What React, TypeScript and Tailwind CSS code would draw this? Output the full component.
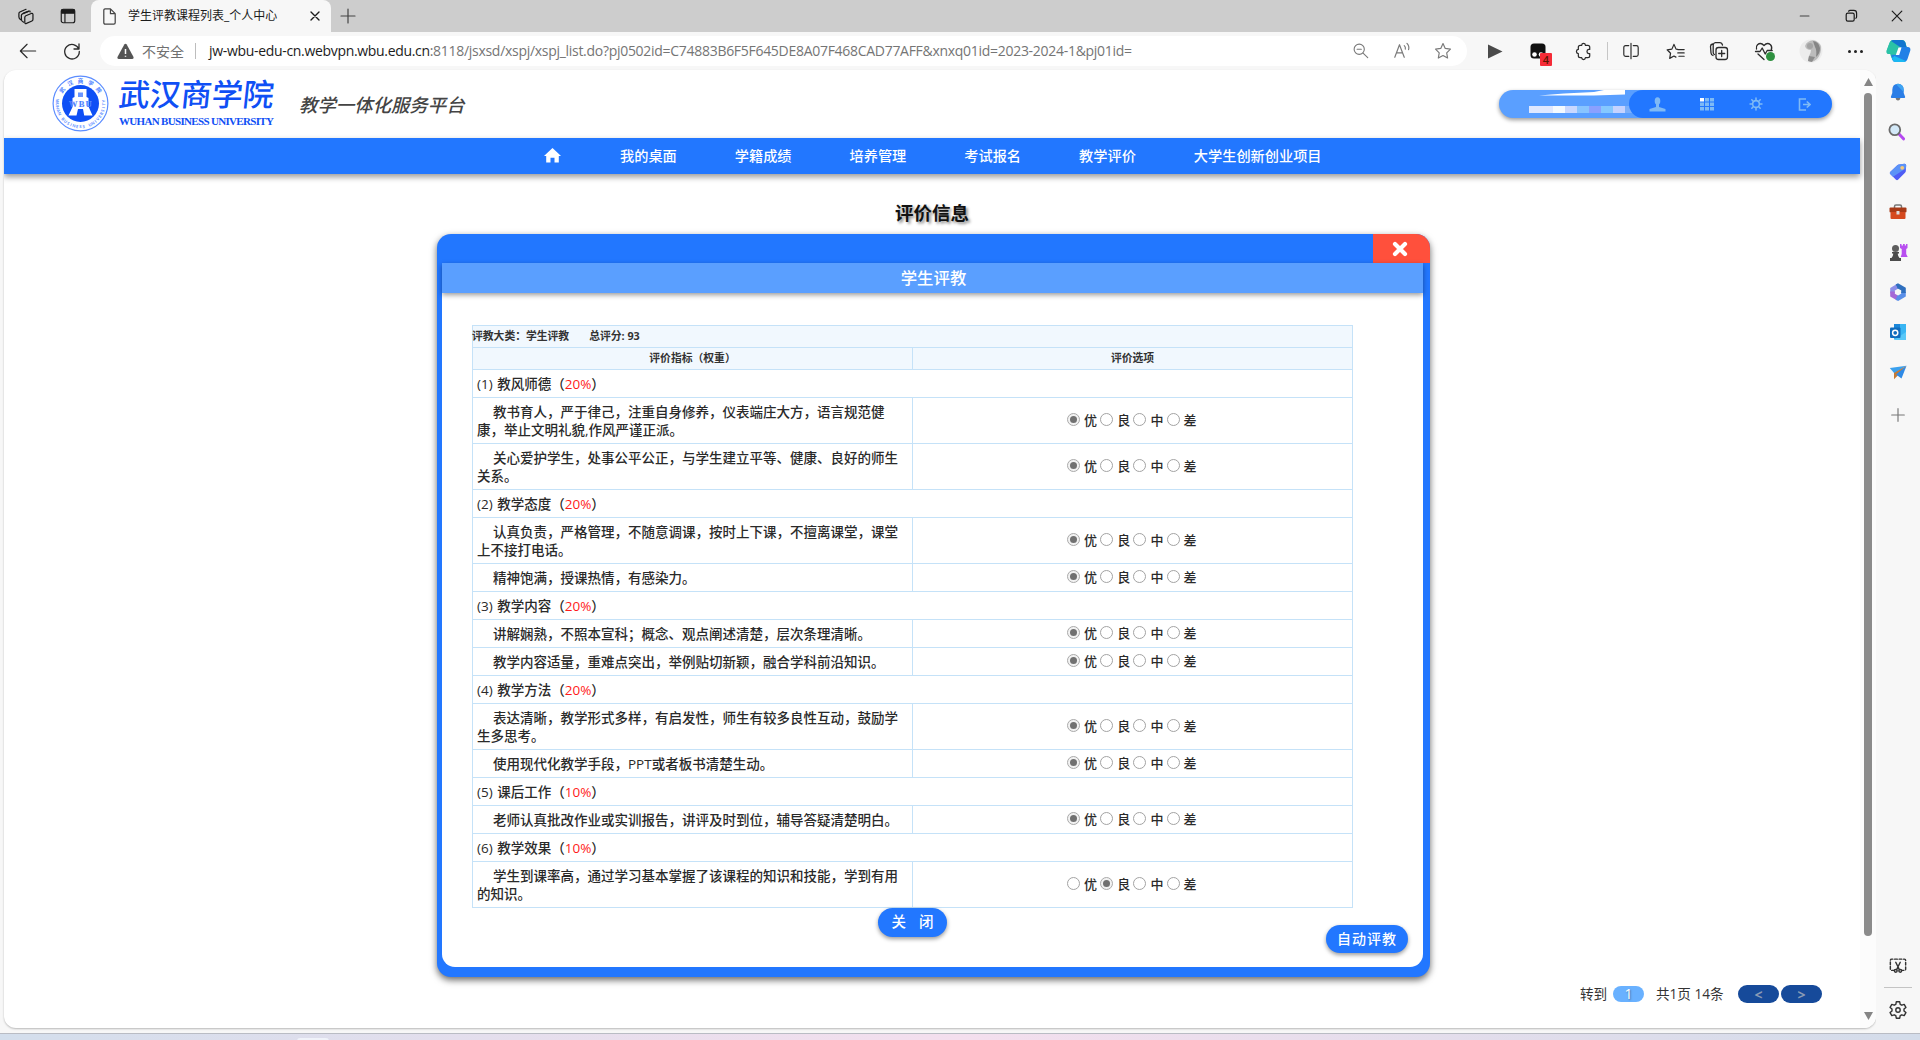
import React from "react";

type Kids = { children?: React.ReactNode };

/* ---------- generic helpers ---------- */

function Stroke({ size = 20, children, className = "", w = 1.3 }: Kids & { size?: number; className?: string; w?: number }) {
  return (
    <svg width={size} height={size} viewBox="0 0 20 20" fill="none" stroke="currentColor" strokeWidth={w} strokeLinecap="round" strokeLinejoin="round" className={"shrink-0 " + className}>
      {children}
    </svg>
  );
}

/* ---------- browser chrome ---------- */

function TabStrip() {
  return (
    <div className="flex h-8 shrink-0 items-center bg-[#cdcdcd] text-[#1b1b1b]">
      <div className="flex w-[52px] justify-center">
        <Stroke size={19}>
          <path d="M7 6.5 12.5 4.3q1.3-.4 1.3.9M4.3 13.5q-2.3-1-2.3-3V7q0-1.2 1-1.7L9.5 2.4" />
          <path d="M6.8 16q-2.2-.8-2.2-3V9q0-1.3 1.1-1.8L12 4.6" />
          <path d="M9.3 9.2 15 6.8q1.800-.6 1.800 1.200v5q0 1.300-1.100 1.800L10 17.300q-1.800.6-1.800-1.200V11q0-1.300 1.100-1.800z" />
        </Stroke>
      </div>
      <div className="flex w-[32px] justify-center">
        <Stroke size={18}>
          <rect x="2.5" y="2.5" width="15" height="15" rx="2.2" />
          <path d="M3 3.2h14v3.6H3z" fill="currentColor" />
          <path d="M6.6 7v10" />
        </Stroke>
      </div>
      <div className="ml-[7px] flex h-8 w-[240px] items-center rounded-t-lg bg-[#f7f7f7]">
        <div className="flex w-[37px] justify-center">
          <Stroke size={19} className="text-[#444]">
            <path d="M5 2h6l5 5v9.500q0 1.500-1.500 1.500h-9Q4 18 4 16.500V3.500Q4 2 5.500 2M11 2v5h5" />
          </Stroke>
        </div>
        <span className="w-[172px] text-[12px]">学生评教课程列表_个人中心</span>
        <Stroke size={16} className="ml-[7px]" w={1.7}>
          <path d="m5 5 10 10M15 5 5 15" />
        </Stroke>
      </div>
      <Stroke size={20} className="ml-[7px] text-[#444]" w={1.2}>
        <path d="M10 3v14M3 10h14" />
      </Stroke>
      <div className="ml-auto flex">
        <div className="flex w-[46px] justify-center">
          <Stroke size={16} className="text-[#444]"><path d="M4 10h11" /></Stroke>
        </div>
        <div className="flex w-[46px] justify-center">
          <Stroke size={16} w={1.5}>
            <rect x="4" y="6.500" width="10" height="10" rx="2" />
            <path d="M7 4q.5-1 2-1h4.500Q17 3 17 6.500v4.300q0 1.500-1 2" />
          </Stroke>
        </div>
        <div className="flex w-[46px] justify-center">
          <Stroke size={16} w={1.5}><path d="m4 4 12 12M16 4 4 16" /></Stroke>
        </div>
      </div>
    </div>
  );
}

function ToolCell({ children }: Kids) {
  return <div className="relative flex w-[45px] shrink-0 items-center justify-center">{children}</div>;
}

function Copilot() {
  return (
    <svg width="25" height="24" viewBox="0 0 25 24">
      <path d="M7.500 1h8.500q2.500 0 3.300 2.500L20.500 8H15L10 21H8.500q-2.500 0-3.200-2.500L4.200 15H3q-3 0-2.300-3.500L3.500 4Q4.500 1 7.500 1z" fill="#2ab7b0" />
      <path d="M7.500 1h8.500q2.500 0 3.300 2.500L20.500 8H14q-2 0-2.600 1.700L9.800 15H3q-3 0-2.300-3.500L3.500 4Q4.500 1 7.500 1z" fill="#2bc3a6" />
      <path d="M7 1h9q2.500 0 3.300 2.500L20.500 8H14L5 2z" fill="#1276cf" />
      <path d="M15.200 8h6.500q3.300 0 2.600 3.500L21.500 20q-1 3-4 3H9.500q-2.500 0-3.300-2.500L5.500 16h5q2 0 2.600-1.700z" fill="#2180e6" />
      <path d="m8.500 17-2.600 2q.9 4 3.600 4h8q1.500 0 2.500-1z" fill="#1bb8f2" />
      <path d="M12.500 8.500h3l-2.300 7.500h-3.400z" fill="#fff" />
    </svg>
  );
}

function Toolbar() {
  return (
    <div className="flex h-[38px] shrink-0 items-center bg-[#f7f7f7] text-[#2b2b2b]">
      <div className="flex w-[56px] justify-center">
        <Stroke size={18}><path d="M18.500 10H1.500M9 2.500 1.500 10 9 17.500" /></Stroke>
      </div>
      <div className="flex w-[32px] justify-center">
        <Stroke size={20} w={1.3}><path d="M16.800 8A7.300 7.300 0 1 0 17.300 10.500M17 3v5h-5" /></Stroke>
      </div>
      <div className="ml-3 flex h-[30px] w-[1367px] items-center rounded-full bg-white">
        <svg width="17" height="17" viewBox="0 0 17 17" className="ml-[17px]">
          <path d="M7.300 1.500q1.200-1.600 2.400 0l6.700 12.300q.7 2-1.300 2.200H1.900q-2-.2-1.300-2.200z" fill="#555" />
          <path d="M8.500 6v5M8.500 12.800v1" stroke="#fff" strokeWidth="1.500" />
        </svg>
        <span className="ml-[8px] text-[14px] text-[#707070]">不安全</span>
        <div className="ml-[11px] h-4 w-px bg-[#bdbdbd]" />
        <span className="ml-[13px] w-[1131px] whitespace-nowrap text-[14px] leading-5 text-[#757575]">
          <span className="tracking-[-0.32px] text-[#1c1c1c]">jw-wbu-edu-cn.webvpn.wbu.edu.cn</span>
          <span className="tracking-[-0.29px]">:8118/jsxsd/xspj/xspj_list.do?pj0502id=C74883B6F5F645DE8A07F468CAD77AFF&amp;xnxq01id=2023-2024-1&amp;pj01id=</span>
        </span>
        <div className="flex text-[#7a7a7a]">
          <div className="flex w-[41px] justify-center">
            <Stroke size={17}><circle cx="8.500" cy="8.500" r="6" /><path d="M6 8.500h5M13 13l5.500 5.500" /></Stroke>
          </div>
          <div className="flex w-[41px] justify-center">
            <Stroke size={18}><path d="m2 17 5.200-14L12.500 17M4 12h6.700M12.500 4q1.700 1.500 1.200 4M15.500 1.500q3 3 1.800 7" /></Stroke>
          </div>
          <div className="flex w-[41px] justify-center">
            <Stroke size={18}><path d="m10 1.800 2.500 5.300 5.800.8-4.200 4.100 1 5.800-5.100-2.800-5.200 2.800 1-5.800L1.700 7.900l5.800-.8z" /></Stroke>
          </div>
        </div>
      </div>
      <div className="ml-[5px] flex h-full">
        <ToolCell>
          <svg width="16" height="15" viewBox="0 0 16 15"><path d="M1 0.500 15.500 7.500 1 14.500z" fill="#4a4a4a" /></svg>
        </ToolCell>
        <ToolCell>
          <svg width="16" height="16" viewBox="0 0 16 16" className="-ml-1">
            <rect x="0.500" y="0.500" width="15" height="15" rx="3.500" fill="#111" />
            <circle cx="4.500" cy="11.500" r="2.300" fill="#fff" />
            <circle cx="11" cy="11.500" r="2.300" fill="#fff" />
          </svg>
          <span className="absolute top-[21px] left-[23px] flex h-[13px] w-[12px] items-center justify-center rounded-[1px] bg-[#f52b37] text-[11px] leading-none font-semibold text-[#5a1500]">4</span>
        </ToolCell>
        <ToolCell>
          <Stroke size={19}>
            <path d="M7 3.500q.2-2 2-2t2 2h2.500q2 0 2 2v2.300h-1q-1.900.2-1.900 2.200t1.900 2.200h1v2.300q0 2-2 2H11q-.2 2-2 2t-2-2H5.500q-2 0-2-2v-2.300q-2-.2-2-2.200t2-2.200V5.500q0-2 2-2z" />
          </Stroke>
        </ToolCell>
        <div className="mt-[10px] h-[18px] w-px bg-[#c6c6c6]" />
        <ToolCell>
          <Stroke size={18}><path d="M10 1.500v17M7.500 4H4Q2 4 2 6v8q0 2 2 2h3.500M12.500 4H16q2 0 2 2v8q0 2-2 2h-3.500" /></Stroke>
        </ToolCell>
        <ToolCell>
          <Stroke size={19}><path d="M11.800 7.200 10 7 7.800 2 5.600 7l-5 .7 3.600 3.600-.9 5.400 4.500-2.400 2 1.100M11.800 7.500h6.700M11.800 11h6.700M13 14.500h5.500" transform="translate(.6 .5)" /></Stroke>
        </ToolCell>
        <ToolCell>
          <Stroke size={20} w={1.3} className="-ml-1">
            <rect x="7" y="6.500" width="11.500" height="12" rx="2.500" />
            <path d="M12.700 9.500v6M9.700 12.500h6M4 14.500q-1.800-.6-2-2.500L1.500 5.500Q1.500 3.500 3.500 3M5.500 13.500q-1.300-.4-1.300-2V4q.2-2.200 2-2.400H11q2 .1 2.500 2.400" />
          </Stroke>
        </ToolCell>
        <ToolCell>
          <Stroke size={20} w={1.3} className="-ml-1">
            <path d="M2.500 8Q1.800 5.500 3.500 3.800q3.200-2.800 6.500.7 3.300-3.500 6.500-.7 2 2.200.8 5M1.500 10.500H6L8.200 7l3 6 2-3.500h5M4 13l6 5.500" />
          </Stroke>
          <span className="absolute top-[20px] left-[23px] h-[9px] w-[9px] rounded-full bg-[#2f9140]" />
        </ToolCell>
        <ToolCell>
          <svg width="24" height="24" viewBox="0 0 24 24">
            <circle cx="12" cy="12" r="11.500" fill="#ececec" />
            <path d="M9 3q4-3 8-1 6 3 5 9-1 6-4 9-4 4-9 2l1-5q2-3 2-6-5 0-6-4 1-3 3-4z" fill="#bcbcbc" />
            <path d="M14 2q6 1 7 7 0 6-4 9 1-7-1-10-1-3-2-6z" fill="#858585" />
            <circle cx="11" cy="7" r="3" fill="#a3a3a3" />
            <path d="m10 17 6 1-3 5-4-1z" fill="#8d8d8d" />
          </svg>
        </ToolCell>
        <ToolCell>
          <div className="flex gap-[3px]">
            <span className="h-[3px] w-[3px] rounded-full bg-[#222]" />
            <span className="h-[3px] w-[3px] rounded-full bg-[#222]" />
            <span className="h-[3px] w-[3px] rounded-full bg-[#222]" />
          </div>
        </ToolCell>
        <div className="flex w-[41px] items-center justify-center"><Copilot /></div>
      </div>
    </div>
  );
}

/* ---------- edge sidebar ---------- */

function EdgeSidebar() {
  const cell = "flex h-10 w-full items-center justify-center";
  return (
    <aside className="flex w-11 shrink-0 flex-col items-center bg-[#f7f7f7] pt-[2px] text-[#333]">
      <div className={cell}>
        <svg width="16" height="18" viewBox="0 0 16 18">
          <path d="M5.500 14h5q-.3 3.500-2.500 3.500T5.500 14z" fill="#777" />
          <path d="M8 .8q5.500.3 5.700 6V10l1.500 4q0 1-1 1H1.800q-1 0-1-1l1.500-4V6.800Q2.500 1 8 .8z" fill="#2b7ee6" />
          <path d="M8 .8q5.500.3 5.700 6V9L6 1.200q1-.4 2-.4z" fill="#3fa4f2" />
        </svg>
      </div>
      <div className={cell}>
        <svg width="17" height="18" viewBox="0 0 17 18" className="-ml-1">
          <path d="m11 11 4.500 4.800" stroke="#b548f0" strokeWidth="3" strokeLinecap="round" />
          <circle cx="6.800" cy="6.800" r="5.400" fill="#d3e9f8" stroke="#6b6b6b" strokeWidth="1.800" />
        </svg>
      </div>
      <div className={cell}>
        <svg width="18" height="18" viewBox="0 0 18 18">
          <path d="M10 1.500 15.500.8q1.700 0 1.700 1.700l-.4 5.700q-.1.900-.8 1.600l-7 7q-1 .9-2 0L1.200 11q-.9-1 0-2L8.300 2.200q.7-.6 1.700-.7z" fill="#4f5df5" />
          <path d="M10 1.500 15.500.8q1.700 0 1.700 1.700l-.4 3L4 13.800 1.200 11q-.9-1 0-2L8.300 2.200q.7-.6 1.700-.7z" fill="#5b93f7" />
          <circle cx="13.200" cy="4.800" r="1.900" fill="#f6c77a" />
        </svg>
      </div>
      <div className={cell}>
        <svg width="18" height="16" viewBox="0 0 18 16">
          <path d="M5.500 4V2.500q0-1.500 1.500-1.500h4q1.500 0 1.500 1.500V4" fill="none" stroke="#777" strokeWidth="1.500" />
          <rect x="0.500" y="3.500" width="17" height="5" rx="1" fill="#a83a17" />
          <rect x="1.500" y="8" width="15" height="7" rx="1" fill="#d5491e" />
          <rect x="7.500" y="7" width="3" height="3.500" fill="#ddd" />
        </svg>
      </div>
      <div className={cell}>
        <svg width="19" height="19" viewBox="0 0 19 19">
          <path d="M11 1h1.500v1.500H14V1h1.800v1.500H17V1h1.500v4l-1.300 1v5l1.500 3h-7l1-3V6L11 5z" fill="#b84ff0" />
          <circle cx="6.500" cy="5.500" r="3.500" fill="#5e5e5e" />
          <path d="M3 9h7v1.500H8.800q0 3 1.700 4.500h1.500v3H1v-3h1.500q1.700-1.500 1.700-4.500H3z" fill="#4b4b4b" />
        </svg>
      </div>
      <div className={cell}>
        <svg width="18" height="18" viewBox="0 0 18 18" fill="none" strokeWidth="4.600">
          <path d="M9 3 3.500 6.200v4" stroke="#8d8fe8" />
          <path d="M3.500 8.500v3.600L9 15.200" stroke="#a568d6" />
          <path d="m7.500 14.600 1.500.7 5.500-3.200V9" stroke="#5a8fe8" />
          <path d="M14.500 10V6L9 2.900l-1.200.7" stroke="#2f6fbe" />
        </svg>
      </div>
      <div className={cell}>
        <svg width="18" height="18" viewBox="0 0 18 18">
          <path d="M5 1h12v15.500H5z" fill="#39b5f3" />
          <path d="M5 1h6v7H5z" fill="#1b86d8" /><path d="M5 17 17 9v8z" fill="#58c8f8" />
          <rect x="1" y="4.500" width="10.500" height="10.500" rx="1" fill="#0f6cbd" />
          <circle cx="6.200" cy="9.800" r="2.600" fill="none" stroke="#fff" strokeWidth="1.500" />
        </svg>
      </div>
      <div className={cell}>
        <svg width="18" height="15" viewBox="0 0 18 15">
          <path d="M.8 3 17.500.7 5.500 8.500z" fill="#3aa0ee" />
          <path d="M17.500.7 5 8v6.300l3-3z" fill="#c77a34" />
          <path d="M17.500.7 12.500 13.500 7 9.500z" fill="#2f8ae6" />
        </svg>
      </div>
      <div className="mt-[3px] flex h-10 items-center"><Stroke size={18} className="text-[#777]"><path d="M10 3v14M3 10h14" /></Stroke></div>
      <div className="mt-auto flex h-10 items-center">
        <Stroke size={18} w={1.6}>
          <path d="M6 16H3q-1.500 0-1.500-1.500V5Q1.500 3.500 3 3.500h14q1.500 0 1.500 1.500v9.500Q18.500 16 17 16h-3" strokeDasharray="3 2" />
          <path d="m7.500 7 4 8M12.500 7l-4 8" /><circle cx="7.500" cy="16.500" r="1.600" /><circle cx="12.500" cy="16.500" r="1.600" />
        </Stroke>
      </div>
      <div className="mt-[2px] h-px w-7 bg-[#c4c4c4]" />
      <div className="mb-px flex h-11 items-center">
        <Stroke size={20} w={1.4}>
          <path d="m8.300 1.800-.5 2.500-1.600.9-2.400-.8-1.700 3L4 9.100v1.800l-1.900 1.700 1.700 3 2.400-.8 1.600.9.500 2.500h3.400l.5-2.500 1.600-.9 2.400.8 1.700-3-1.900-1.700V9.100l1.900-1.700-1.700-3-2.400.8-1.600-.9-.5-2.500z" />
          <circle cx="10" cy="10" r="2.200" />
        </Stroke>
      </div>
    </aside>
  );
}

/* ---------- site header ---------- */

const RING_TOP = Array.from("武汉商学院");
const RING_BOTTOM = Array.from("WUHAN BUSINESS UNIVERSITY");

function Seal() {
  return (
    <svg width="57" height="57" viewBox="0 0 57 57" className="shrink-0">
      <circle cx="28.500" cy="28.500" r="27.400" fill="#fff" stroke="#5c8dff" strokeWidth="1.200" />
      <circle cx="28.500" cy="28.500" r="18.500" fill="#0f4ff5" />
      {RING_TOP.map((c, i) => (
        <text key={c} x="28.500" y="7.800" fontSize="5.500" fontWeight="700" textAnchor="middle" fill="#4b80ff" transform={`rotate(${-54 + i * 27} 28.500 28.500)`}>{c}</text>
      ))}
      {RING_BOTTOM.map((c, i) =>
        c === " " ? null : (
          <text key={i} x="28.500" y="53.300" fontSize="4.200" fontWeight="700" textAnchor="middle" fill="#6a96ff" transform={`rotate(${96 - i * 8} 28.500 28.500)`}>{c}</text>
        )
      )}
      <path d="M22.500 14h12v8l2 1v8.500l4 9h-8.300L31 34h-5l-1.500 6.500h-8l4-8.500v-9l2-1z" fill="#fff" />
      <path d="M26 17.500h5v4.500h-5z" fill="#6b96ff" />
      <text x="29" y="31.500" fontSize="8.500" fontWeight="700" textAnchor="middle" fill="#3c72ff" stroke="#9dbaff" strokeWidth="0.200" fontFamily="Liberation Serif, serif" letterSpacing="1.200">WBU</text>
    </svg>
  );
}

function UserPill() {
  const blocks = ["bg-[#dfe8ff]", "bg-[#dfe8ff]", "bg-[#f4faff]", "bg-[#c9d8ff]", "bg-[#88c4ff]", "bg-[#8aa0ff]", "bg-[#85c8ff]", "bg-[#c5d3ff]", "bg-[#7db0fa]"];
  return (
    <div className="mt-5 mr-7 ml-auto flex h-7 w-[333px] overflow-hidden rounded-[14px] bg-[#5a9fff] shadow-[0_2px_4px_rgba(0,0,0,0.4)]">
      <div className="flex w-[130px] flex-col">
        <svg width="130" height="6" viewBox="0 0 130 6"><path d="M40 5.500 65 3.500 95 2l10-2h21v4.500L95 5.500z" fill="#fff" /></svg>
        <div className="mt-[10px] ml-[30px] flex h-[7px] w-[108px]">
          {blocks.map((b, i) => <span key={i} className={"h-full w-3 shrink-0 " + b} />)}
        </div>
      </div>
      <div className="flex flex-1 items-center rounded-[14px] bg-[#2277ff] pl-1 text-[#7fbaf5]">
        <div className="flex w-[49px] justify-center">
          <svg width="17" height="15" viewBox="0 0 17 15" fill="currentColor"><ellipse cx="8.500" cy="4" rx="2.800" ry="3.800" /><path d="M7 7h3v3l6.500 2v2.500H.5V12L7 10z" /></svg>
        </div>
        <div className="flex w-[49px] justify-center">
          <svg width="14" height="13" viewBox="0 0 14 13" fill="currentColor">
            {[0, 5, 10].map((x) => [0, 4.5, 9].map((y) => <rect key={x + "-" + y} x={x} y={y} width="4" height="3.500" fill={x === 0 && y === 0 ? "#fff" : "currentColor"} />))}
          </svg>
        </div>
        <div className="flex w-[49px] justify-center">
          <Stroke size={14} w={2.2}><circle cx="10" cy="10" r="4.800" /><path d="M10 1.500v3M10 15.500v3M1.500 10h3M15.500 10h3M4 4l2 2M14 14l2 2M4 16l2-2M14 6l2-2" /></Stroke>
        </div>
        <div className="flex w-[49px] justify-center">
          <svg width="13" height="13" viewBox="0 0 13 13" fill="none" stroke="currentColor" strokeWidth="1.600"><path d="M8 1H1.500v11H8M5 6.500h7M8.800 3.500 12 6.500 8.800 9.500" /></svg>
        </div>
      </div>
    </div>
  );
}

function SiteHeader() {
  return (
    <header className="flex h-[68px] shrink-0 items-start pl-12">
      <div className="mt-[5px]"><Seal /></div>
      <div className="ml-[10px] mt-[6px] w-[156px] text-[#0f4ff5]">
        <div className="-skew-x-6 whitespace-nowrap text-[31px] leading-[36px] font-medium">武汉商学院</div>
        <div className="mt-[2px] whitespace-nowrap font-['Liberation_Serif',serif] text-[11px] leading-[14px] font-bold tracking-[-0.68px]">WUHAN BUSINESS UNIVERSITY</div>
      </div>
      <div className="ml-6 mt-[21px] text-[18.400px] leading-7 font-medium text-[#444] italic">教学一体化服务平台</div>
      <UserPill />
    </header>
  );
}

const NAV = ["我的桌面", "学籍成绩", "培养管理", "考试报名", "教学评价", "大学生创新创业项目"];

function NavBar() {
  return (
    <nav className="flex h-9 shrink-0 items-center bg-[#2277ff] pb-px pl-[540px] text-[14.200px] font-medium text-white shadow-[0_3px_6px_rgba(0,0,0,0.4)]">
      <svg width="17" height="15" viewBox="0 0 17 15" className="mr-[59px]"><path d="M8.500 0 17 8h-2.200v6.500h-4.300v-4.700h-4v4.700H2.200V8H0z" fill="#fff" /></svg>
      <div className="flex gap-[58px]">
        {NAV.map((n) => <span key={n} className="whitespace-nowrap">{n}</span>)}
      </div>
    </nav>
  );
}

/* ---------- evaluation form ---------- */

type Group = { title: string; weight: string; items: { text: string; pick: number; tall?: boolean }[] };

const GROUPS: Group[] = [
  { title: "(1) 教风师德", weight: "20%", items: [
    { text: "教书育人，严于律己，注重自身修养，仪表端庄大方，语言规范健康，举止文明礼貌,作风严谨正派。", pick: 0, tall: true },
    { text: "关心爱护学生，处事公平公正，与学生建立平等、健康、良好的师生关系。", pick: 0, tall: true } ] },
  { title: "(2) 教学态度", weight: "20%", items: [
    { text: "认真负责，严格管理，不随意调课，按时上下课，不擅离课堂，课堂上不接打电话。", pick: 0, tall: true },
    { text: "精神饱满，授课热情，有感染力。", pick: 0 } ] },
  { title: "(3) 教学内容", weight: "20%", items: [
    { text: "讲解娴熟，不照本宣科；概念、观点阐述清楚，层次条理清晰。", pick: 0 },
    { text: "教学内容适量，重难点突出，举例贴切新颖，融合学科前沿知识。", pick: 0 } ] },
  { title: "(4) 教学方法", weight: "20%", items: [
    { text: "表达清晰，教学形式多样，有启发性，师生有较多良性互动，鼓励学生多思考。", pick: 0, tall: true },
    { text: "使用现代化教学手段，PPT或者板书清楚生动。", pick: 0 } ] },
  { title: "(5) 课后工作", weight: "10%", items: [
    { text: "老师认真批改作业或实训报告，讲评及时到位，辅导答疑清楚明白。", pick: 0 } ] },
  { title: "(6) 教学效果", weight: "10%", items: [
    { text: "学生到课率高，通过学习基本掌握了该课程的知识和技能，学到有用的知识。", pick: 1, tall: true } ] },
];

function Radio({ on }: { on: boolean }) {
  return (
    <span className={"flex h-[13px] w-[13px] items-center justify-center rounded-full border " + (on ? "border-[#aaa] bg-[#f2f2f2]" : "border-[#a3a3a3] bg-white")}>
      {on && <span className="h-[7px] w-[7px] rounded-full bg-[#717171]" />}
    </span>
  );
}

function Options({ pick }: { pick: number }) {
  return (
    <div className="flex items-center pb-[2px] pl-[154px] text-[13px] leading-4">
      {["优", "良", "中", "差"].map((o, i) => (
        <span key={o} className="flex w-[33.200px] items-center gap-[4px]">
          <Radio on={pick === i} />
          <span className="pt-px">{o}</span>
        </span>
      ))}
    </div>
  );
}

function EvalTable() {
  return (
    <div className="w-[881px] border-t border-l border-[#c5e2f8] text-[13.500px] leading-[18px] font-medium text-[#2a2a2a]">
      <div className="flex h-[22px] items-center border-r border-b border-[#c5e2f8] bg-[#f1f8fe] pb-[2px] text-[10.800px] font-bold text-[#333]">
        <span className="-ml-px">评教大类：学生评教</span>
        <span className="ml-[20px]">总评分: 93</span>
      </div>
      <div className="flex h-[22px] border-b border-[#c5e2f8] bg-[#f1f8fe] text-[10.800px] font-bold text-[#333]">
        <div className="flex w-[440px] items-center justify-center border-r border-[#c5e2f8] pb-[2px]">评价指标（权重）</div>
        <div className="flex w-[440px] items-center justify-center border-r border-[#c5e2f8] pb-[2px]">评价选项</div>
      </div>
      {GROUPS.map((g) => (
        <React.Fragment key={g.title}>
          <div className="flex h-7 items-center border-r border-b border-[#c5e2f8] pl-1 whitespace-pre">
            <span className="[word-spacing:1px]">{g.title}（</span>
            <span className="text-[#ff1a1a]">{g.weight}</span>）
          </div>
          {g.items.map((it) => (
            <div key={it.text} className={"flex border-b border-[#c5e2f8] " + (it.tall ? "h-[46px]" : "h-7")}>
              <div className="flex w-[440px] items-center border-r border-[#c5e2f8] pl-1">
                <p className="w-[422px] indent-4">{it.text}</p>
              </div>
              <div className="flex w-[440px] items-center border-r border-[#c5e2f8]"><Options pick={it.pick} /></div>
            </div>
          ))}
        </React.Fragment>
      ))}
    </div>
  );
}

function Dialog() {
  return (
    <section className="absolute top-[164px] left-[433px] flex h-[743px] w-[993px] flex-col overflow-hidden rounded-[14px] bg-[#2277ff] shadow-[0_3px_7px_rgba(0,0,0,0.6)]">
      <div className="flex h-[29px] shrink-0 justify-end">
        <button className="flex h-full w-[57px] items-center justify-center bg-[#ff503c] pr-[3px]">
          <svg width="16" height="16" viewBox="0 0 16 16"><path d="m3 3 10 10M13 3 3 13" stroke="#fff" strokeWidth="4.200" strokeLinecap="round" /></svg>
        </button>
      </div>
      <div className="mr-[7px] mb-[10px] ml-[5px] flex flex-1 flex-col rounded-b-[13px] bg-white">
        <div className="flex h-[30px] shrink-0 items-center justify-center bg-[#5a9fff] pt-px pl-[2px] text-[16.400px] font-medium text-white shadow-[0_2px_5px_rgba(0,0,0,0.4)]">学生评教</div>
        <div className="pt-[32px] pl-[30px]"><EvalTable /></div>
        <div className="flex">
          <button className="ml-[436px] flex h-[29px] w-[69px] items-center justify-center gap-[13px] rounded-full bg-[#2277ff] pb-px text-[14.500px] font-medium text-white shadow-[0_2px_4px_rgba(0,0,0,0.4)]"><span>关</span><span>闭</span></button>
          <button className="mt-[17px] ml-[379px] flex h-[28px] w-[82px] items-center justify-center rounded-full bg-[#2277ff] pb-[2px] text-[14px] font-medium tracking-[1px] text-white shadow-[0_2px_4px_rgba(0,0,0,0.4)]">自动评教</button>
        </div>
      </div>
    </section>
  );
}

function Pager() {
  return (
    <div className="mt-auto mb-[23px] flex h-[22px] items-center pl-[1576px] text-[13.600px] text-[#333]">
      <span className="w-[33px]">转到</span>
      <span className="mb-px flex h-4 w-[31px] items-center justify-center rounded-full bg-[#69b1ff] pb-px text-[14px] text-white [text-shadow:1px_1px_2px_rgba(0,0,0,0.4)]">1</span>
      <span className="ml-3 w-[82px] whitespace-nowrap">共1页 14条</span>
      <button className="flex h-[18px] w-[41px] items-center justify-center rounded-full bg-[#164a9a] text-[14px] font-bold text-[#8a9bb5]">&lt;</button>
      <button className="ml-[2px] flex h-[18px] w-[41px] items-center justify-center rounded-full bg-[#164a9a] text-[14px] font-bold text-[#8a9bb5]">&gt;</button>
    </div>
  );
}

function Scrollbar() {
  return (
    <div className="flex w-[16px] shrink-0 flex-col items-center bg-[#fcfcfc] py-2">
      <svg width="9" height="8" viewBox="0 0 9 8"><path d="M4.500 0 9 8H0z" fill="#858585" /></svg>
      <div className="mt-[7px] h-[843px] w-2 rounded-full bg-[#8b8b8b]" />
      <svg width="9" height="8" viewBox="0 0 9 8" className="mt-auto"><path d="M4.500 8 9 0H0z" fill="#858585" /></svg>
    </div>
  );
}

export default function App() {
  return (
    <div className="flex h-[1040px] w-[1920px] flex-col overflow-hidden bg-[#f7f7f7] font-['Open_Sans','Noto_Sans_CJK_SC',sans-serif]">
      <TabStrip />
      <Toolbar />
      <div className="flex min-h-0 flex-1">
        <div className="flex h-[958px] w-[1876px] pl-1">
          <main className="flex flex-1 overflow-hidden rounded-xl bg-white shadow-[0_1px_2px_rgba(0,0,0,0.25)]">
            <div className="relative flex flex-1 flex-col">
              <SiteHeader />
              <NavBar />
              <h1 className="mt-[25px] text-center text-[18.500px] leading-7 font-bold text-[#111] [text-shadow:2px_2px_3px_rgba(0,0,0,0.45)]">评价信息</h1>
              <Dialog />
              <Pager />
            </div>
            <Scrollbar />
          </main>
        </div>
        <EdgeSidebar />
      </div>
      <div className="flex h-[7px] shrink-0 border-t border-[#b9bcc4] bg-linear-to-r from-[#d3deec] via-[#f4dfee] to-[#d3dcea]">
        <div className="mt-[4px] ml-[297px] h-[3px] w-8 rounded-t bg-[#f0f3fa]" />
      </div>
    </div>
  );
}
